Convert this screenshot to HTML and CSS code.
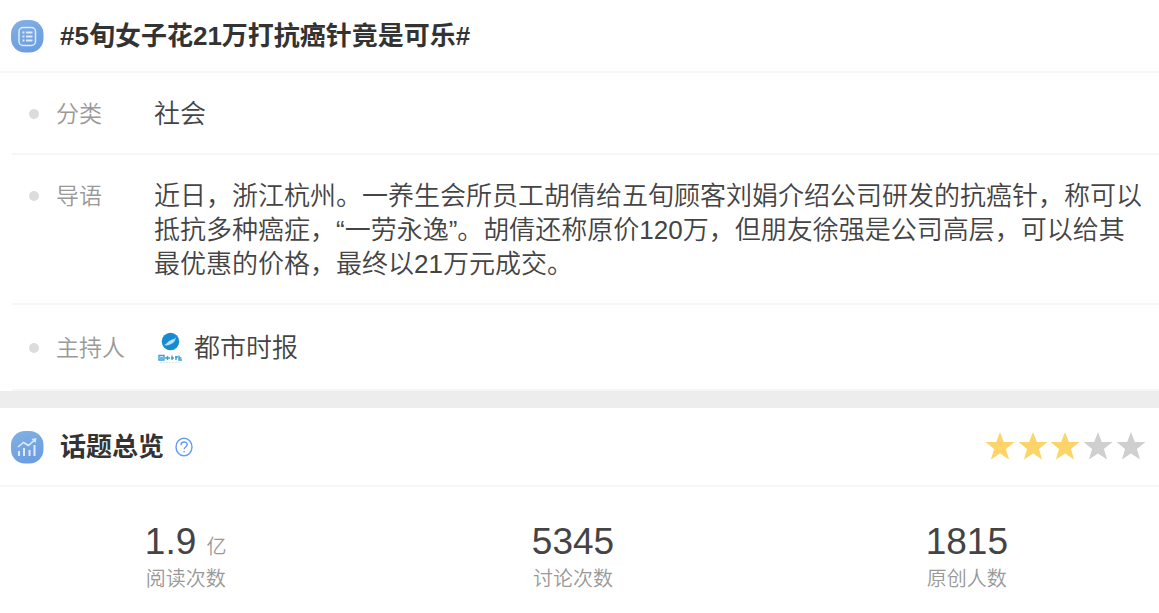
FILE: index.html
```html
<!DOCTYPE html>
<html lang="zh-CN">
<head>
<meta charset="utf-8">
<meta name="viewport" content="width=device-width, initial-scale=1">
<title>#5旬女子花21万打抗癌针竟是可乐#</title>
<link rel="stylesheet" href="styles.css">
</head>
<body>
<main>
  <section class="topic">
    <header class="head">
      <svg class="badge" viewBox="0 0 34 34" aria-hidden="true">
        <defs><linearGradient id="blue" x1="0" y1="0" x2="0.4" y2="1"><stop offset="0" stop-color="#83b1e2"/><stop offset="1" stop-color="#6b9ee3"/></linearGradient></defs>
        <rect x="1" y="1" width="32.500" height="32.500" rx="14" fill="url(#blue)"/>
        <rect x="9" y="8.500" width="16.500" height="18" rx="4" fill="none" stroke="#dfeafa" stroke-width="1.500"/>
        <path d="M12.500 13.500h2M16 13.500h6.500M12.500 17.500h2M16 17.500h6.500M12.500 21.500h2M16 21.500h6.500" stroke="#dfeafa" stroke-width="1.800"/>
      </svg>
      <h1 class="title">#5旬女子花21万打抗癌针竟是可乐#</h1>
    </header>
    <dl class="info">
      <div class="row">
        <dt class="label">分类</dt>
        <dd class="value">社会</dd>
      </div>
      <div class="row">
        <dt class="label">导语</dt>
        <dd class="value">近日，浙江杭州。一养生会所员工胡倩给五旬顾客刘娟介绍公司研发的抗癌针，称可以抵抗多种癌症，“一劳永逸”。胡倩还称原价120万，但朋友徐强是公司高层，可以给其最优惠的价格，最终以21万元成交。</dd>
      </div>
      <div class="row row-host">
        <dt class="label">主持人</dt>
        <dd class="value host">
          <svg class="avatar" viewBox="0 0 32 32" aria-hidden="true">
            <circle cx="16.500" cy="9.500" r="8.700" fill="#168bd0"/>
            <path d="M10 13c3-1 4-4 7-5 2-1 3 0 5-3-1 4-2 6-5 7-2 1-4 2-7 1z" fill="#b9e0f6"/>
            <path d="M5 23.500h5v4.500H5zM6 26h3M11 26h5M13.500 24v4M18 23.500v4.500M17 26h3M22 24v4M21 25h3M25 23.500v4.500h3M24.500 26h3" fill="none" stroke="#3b9fdb" stroke-width="1.400"/>
            <path d="M6 30.500h20" stroke="#dce6ec" stroke-width="1" stroke-dasharray="2 1"/>
          </svg>
          <span>都市时报</span>
        </dd>
      </div>
    </dl>
  </section>
  <section class="overview">
    <header class="head">
      <svg class="badge" viewBox="0 0 34 34" aria-hidden="true">
        <rect x="1" y="1" width="32.500" height="32.500" rx="14" fill="url(#blue)"/>
        <path d="M9 26v-5M14 26v-8M19.500 26v-6M24.500 26V15" stroke="#dfeafa" stroke-width="2"/>
        <path d="M8 17l5.500-4.500 5 3L24 10.500" fill="none" stroke="#dfeafa" stroke-width="1.600"/>
        <path d="M21.500 9l5-1-1 5z" fill="#dfeafa"/>
      </svg>
      <h2 class="title">话题总览</h2>
      <button class="help" type="button" aria-label="说明">
        <svg class="help-icon" viewBox="0 0 18 20" aria-hidden="true">
          <ellipse cx="9" cy="10" rx="8" ry="8.700" fill="none" stroke="#639cf2" stroke-width="1.400"/>
          <path d="M6 8.200c0-4.300 6.200-4.200 6.200-.6 0 2.300-3.100 2.400-3.100 4.700M9.100 14v1.600" fill="none" stroke="#639cf2" stroke-width="1.400"/>
        </svg>
      </button>
      <svg class="stars" viewBox="0 0 162 32" role="img" aria-label="3 / 5">
        <defs><path id="star" d="M15 1l3.800 10 10.700.1-8.600 6.800 3.200 10.600L15 22.500l-9.100 6 3.200-10.600L.5 11.100l10.700-.1z"/></defs>
        <g fill="#fdd468"><use href="#star"/><use href="#star" x="33"/><use href="#star" x="65"/></g>
        <g fill="#cfcfcf"><use href="#star" x="98"/><use href="#star" x="131"/></g>
      </svg>
    </header>
    <ul class="stats">
      <li class="stat"><span class="number">1.9 <small class="unit">亿</small></span><span class="caption">阅读次数</span></li>
      <li class="stat"><span class="number">5345</span><span class="caption">讨论次数</span></li>
      <li class="stat"><span class="number">1815</span><span class="caption">原创人数</span></li>
    </ul>
  </section>
</main>
</body>
</html>
```
FILE: styles.css
```css
* { box-sizing: border-box; }
body {
  margin: 0;
  background: #fff;
  color: #333;
  font-family: "Liberation Sans", "Noto Sans CJK SC", sans-serif;
}
.head {
  display: flex;
  align-items: center;
  height: 73px;
  padding: 0 12px 0 10px;
  border-bottom: 2px solid #f6f6f6;
}
.badge { width: 34px; height: 34px; margin-right: 16px; flex: none; }
.title { margin: 0; font-size: 26px; line-height: 36px; font-weight: 700; }
.info { margin: 0; padding-left: 12px; }
.row {
  display: flex;
  align-items: flex-start;
  padding: 24px 10px 22px 17px;
  border-bottom: 2px solid #f6f6f6;
}
.label {
  display: flex;
  align-items: center;
  flex: none;
  width: 125px;
  font-size: 23px;
  line-height: 34px;
  font-weight: 350;
  color: #999;
}
.label::before {
  content: "";
  width: 10px;
  height: 10px;
  margin-right: 17px;
  border-radius: 50%;
  background: #dcdcdc;
}
.value {
  flex: 1;
  margin: 0;
  color: #444;
  font-size: 26px;
  line-height: 34px;
  font-weight: 350;
}
.row-host { padding: 26px 10px 24px 17px; }
.host { display: flex; align-items: center; gap: 8px; }
.avatar { width: 32px; height: 32px; }
.overview { border-top: 17px solid #ededed; }
.overview .head { height: 79px; }
.help { margin: 0 0 0 11px; padding: 0; border: 0; background: none; line-height: 0; cursor: pointer; }
.help-icon { width: 18px; height: 20px; }
.stars { width: 162px; height: 32px; margin-left: auto; }
.stats {
  display: grid;
  grid-template-columns: 372fr 404fr 385fr;
  margin: 0;
  padding: 32px 0 20px;
  list-style: none;
}
.stat { display: flex; flex-direction: column; align-items: center; }
.number { color: #444; font-size: 37px; line-height: 46px; }
.unit { font-size: 20px; line-height: 20px; font-weight: 350; color: #999; }
.caption { font-size: 20px; line-height: 28px; font-weight: 350; color: #999; }
```
